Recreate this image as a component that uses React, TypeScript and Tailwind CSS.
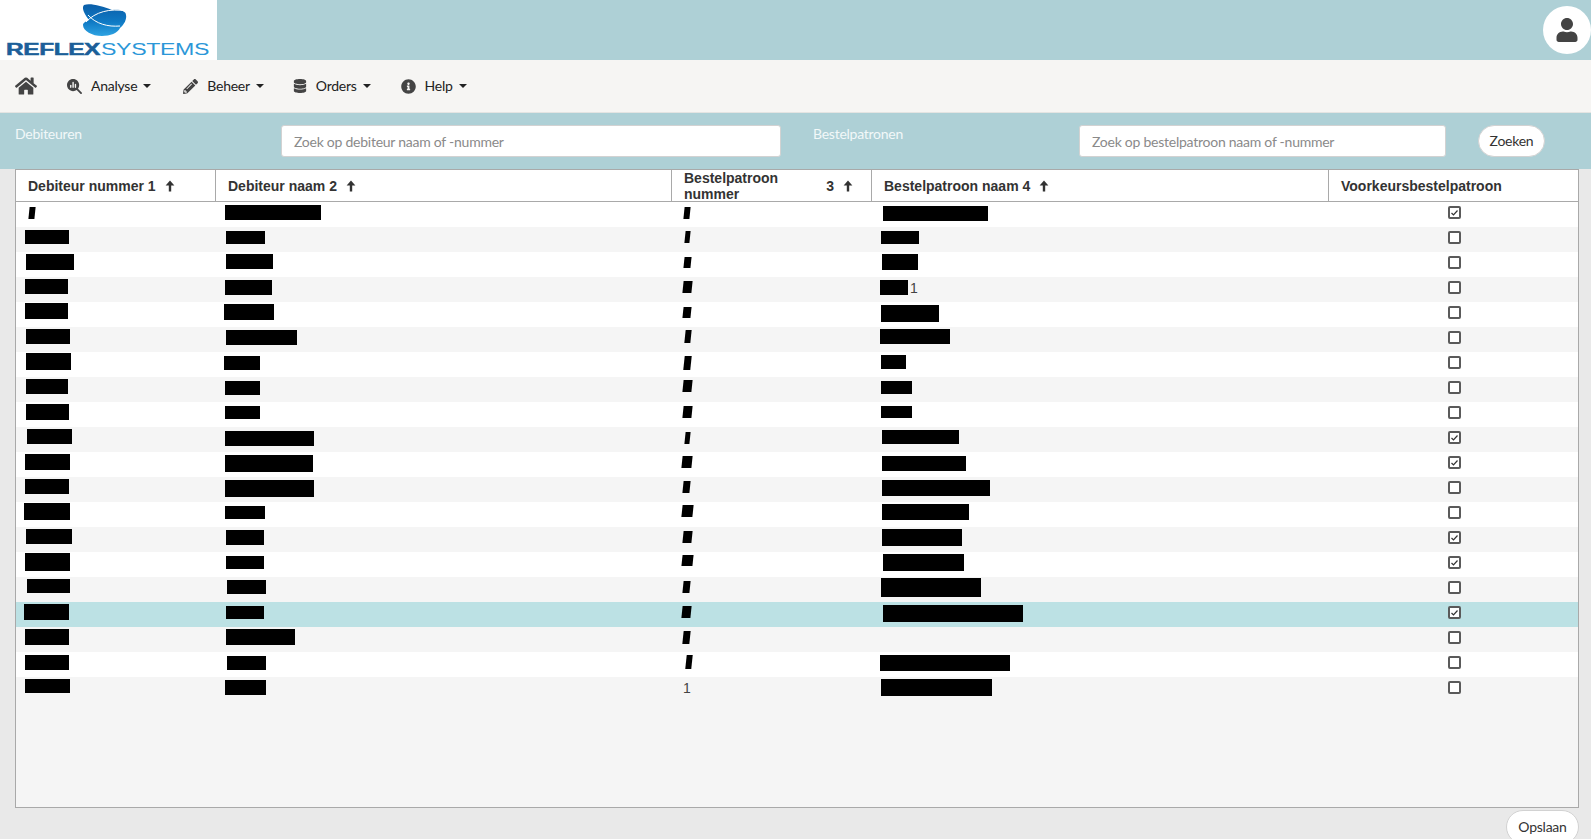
import React from 'react';
import { FaHome, FaPencilAlt, FaDatabase, FaInfoCircle, FaUser } from 'react-icons/fa';
import { FaMagnifyingGlassChart } from 'react-icons/fa6';

type Bar = [number, number, number, number] | null;

// blacked out values, page x / y / w / h per row
const rows: { bars: Bar[]; checked?: boolean; selected?: boolean; num?: string; tail?: string }[] = [
  { bars: [[29, 207, 6, 12], [225, 205, 96, 15], [684, 207, 6, 12], [883, 206, 105, 15]], checked: true },
  { bars: [[25, 230, 44, 14], [226, 231, 39, 13], [685, 231, 5, 12], [881, 231, 38, 13]] },
  { bars: [[26, 254, 48, 16], [226, 254, 47, 15], [684, 257, 7, 11], [882, 254, 36, 16]] },
  { bars: [[25, 279, 43, 15], [225, 280, 47, 15], [683, 281, 9, 12], [880, 280, 28, 15]], tail: '1' },
  { bars: [[25, 303, 43, 16], [224, 304, 50, 16], [683, 307, 8, 11], [881, 305, 58, 17]] },
  { bars: [[26, 329, 44, 15], [226, 330, 71, 15], [685, 330, 6, 13], [880, 329, 70, 15]] },
  { bars: [[26, 353, 45, 17], [224, 356, 36, 14], [684, 356, 7, 14], [881, 355, 25, 14]] },
  { bars: [[26, 379, 42, 15], [225, 381, 35, 14], [683, 380, 9, 12], [881, 381, 31, 13]] },
  { bars: [[26, 404, 43, 16], [225, 406, 35, 13], [683, 406, 9, 12], [881, 406, 31, 12]] },
  { bars: [[27, 429, 45, 15], [225, 431, 89, 15], [685, 432, 5, 12], [882, 430, 77, 14]], checked: true },
  { bars: [[25, 454, 45, 16], [225, 455, 88, 17], [682, 456, 10, 12], [882, 456, 84, 15]], checked: true },
  { bars: [[25, 479, 44, 15], [225, 480, 89, 17], [683, 481, 7, 12], [882, 480, 108, 16]] },
  { bars: [[24, 503, 46, 17], [225, 506, 40, 13], [682, 505, 11, 12], [882, 504, 87, 16]] },
  { bars: [[26, 529, 46, 15], [226, 530, 38, 15], [683, 531, 9, 12], [882, 529, 80, 17]], checked: true },
  { bars: [[25, 553, 45, 18], [226, 556, 38, 13], [682, 555, 11, 11], [883, 554, 81, 17]], checked: true },
  { bars: [[27, 579, 43, 14], [227, 580, 39, 14], [683, 581, 7, 12], [881, 578, 100, 19]] },
  { bars: [[24, 604, 45, 16], [226, 606, 38, 13], [682, 606, 9, 12], [883, 605, 140, 17]], checked: true, selected: true },
  { bars: [[25, 629, 44, 16], [226, 629, 69, 16], [683, 631, 7, 13], null] },
  { bars: [[25, 655, 44, 15], [227, 656, 39, 14], [686, 655, 6, 14], [880, 655, 130, 16]] },
  { bars: [[25, 679, 45, 14], [225, 680, 41, 15], null, [881, 679, 111, 17]], num: '1' },
];

const colLeft = [16, 216, 672, 872];

const ArrowUp = () => (
  <svg width="10" height="12" viewBox="0 0 9 11" className="shrink-0 text-[#333]">
    <path d="M4.5 0.5 L8.5 5 L5.6 5 L5.6 10.5 L3.4 10.5 L3.4 5 L0.5 5 Z" fill="currentColor" />
  </svg>
);

const Caret = () => <span className="ml-[6px] inline-block border-x-[4px] border-t-[4px] border-x-transparent border-t-[#222]" />;

const Logo = () => (
  <svg width="217" height="60" viewBox="0 0 217 60">
    <defs>
      <linearGradient id="lobe" x1="0" y1="0" x2="0" y2="1">
        <stop offset="0" stopColor="#0b5ea8" />
        <stop offset="0.55" stopColor="#0f79c4" />
        <stop offset="1" stopColor="#2ea3e2" />
      </linearGradient>
    </defs>
    <path
      d="M84 5 C90 3 102 6 112 10 C120 9 126 11 126 15 C127 19 124 25 120 28 C118 33 110 36 102 36 C92 36 83 31 83 25 C83 23 86 21 89 20 C85 15 81 8 84 5 Z"
      fill="url(#lobe)"
    />
    <path d="M86 22 C95 12 110 8 126 11" stroke="#fff" strokeWidth="1" fill="none" />
    <path d="M88 15 C96 24 108 27 120 26" stroke="#fff" strokeWidth="1" fill="none" />
    <text x="6" y="55" fontFamily="'Liberation Sans', sans-serif" fontWeight="700" fontSize="16" fill="#1b5f99" stroke="#1b5f99" strokeWidth="0.5" textLength="94" lengthAdjust="spacingAndGlyphs">
      REFLEX
    </text>
    <text x="101" y="55" fontFamily="'Liberation Sans', sans-serif" fontSize="16" fill="#2b97d8" textLength="108" lengthAdjust="spacingAndGlyphs">
      SYSTEMS
    </text>
  </svg>
);

const NavItem = ({ icon, label, className }: { icon: React.ReactNode; label: string; className: string }) => (
  <div className={`flex items-center ${className}`}>
    {icon}
    <span>{label}</span>
    <Caret />
  </div>
);

const Checkbox = ({ checked }: { checked?: boolean }) => (
  <span className="flex h-[13px] w-[13px] items-center justify-center rounded-[2px] border-2 border-[#5a5a5a] bg-white">
    {checked && (
      <svg width="9" height="8" viewBox="0 0 9 8" className="shrink-0">
        <path d="M1.5 4 L3.5 6 L7.5 1.5" stroke="#333" strokeWidth="1.2" fill="none" />
      </svg>
    )}
  </span>
);

const SortHead = ({ label }: { label: string }) => (
  <div className="flex items-center gap-[9px] border-r border-[#a9a9a9] pl-3">
    <span>{label}</span>
    <ArrowUp />
  </div>
);

export default function App() {
  return (
    <div className="flex h-[839px] flex-col overflow-hidden bg-[#e9e9e9] font-['Lato',sans-serif] text-sm tracking-[-0.25px] text-[#333]">
      <header className="flex h-[60px] shrink-0 items-center justify-between bg-[#aed0d6]">
        <div className="h-[60px] w-[217px] bg-white">
          <Logo />
        </div>
        <div className="flex h-12 w-12 items-center justify-center rounded-full bg-white text-[#444]">
          <FaUser size={24} />
        </div>
      </header>

      <nav className="flex h-[53px] shrink-0 items-center border-b border-[#e4e4e2] bg-[#f6f5f3] text-[#222]">
        <FaHome className="ml-[15px] text-[#444]" size={22} />
        <NavItem className="ml-[30px]" label="Analyse" icon={<FaMagnifyingGlassChart className="mr-[9px] text-[#444]" size={15} />} />
        <NavItem className="ml-[32px]" label="Beheer" icon={<FaPencilAlt className="mr-[9px] text-[#444]" size={15} />} />
        <NavItem className="ml-[29px]" label="Orders" icon={<FaDatabase className="mr-[9px] text-[#444]" size={14} />} />
        <NavItem className="ml-[30px]" label="Help" icon={<FaInfoCircle className="mr-[9px] text-[#444]" size={15} />} />
      </nav>

      <div className="flex h-[56px] shrink-0 items-start bg-[#aed0d6] pl-[15px] pt-3">
        <span className="-mt-[1px] w-[266px] text-[#f2f8f9]">Debiteuren</span>
        <div className="flex h-8 w-[500px] items-center rounded-[3px] border border-[#d2d2d2] bg-white pl-3 pt-[1px] text-[#8a8a8a]">
          Zoek op debiteur naam of -nummer
        </div>
        <span className="-mt-[1px] ml-8 w-[266px] text-[#f2f8f9]">Bestelpatronen</span>
        <div className="flex h-8 w-[367px] items-center rounded-[3px] border border-[#d2d2d2] bg-white pl-3 pt-[1px] text-[#8a8a8a]">
          Zoek op bestelpatroon naam of -nummer
        </div>
        <button className="ml-8 h-8 w-[67px] rounded-full border border-[#d2d2d2] bg-white text-[#333]">Zoeken</button>
      </div>

      <main className="flex flex-1 flex-col pl-[15px]">
        <div className="flex h-[639px] w-[1564px] shrink-0 flex-col border border-[#a9a9a9] bg-[#f5f5f5] font-['Liberation_Sans',sans-serif] tracking-normal">
          <div className="grid h-8 shrink-0 grid-cols-[200px_456px_200px_457px_1fr] border-b border-[#a9a9a9] bg-white font-bold text-[#333]">
            <SortHead label="Debiteur nummer 1" />
            <SortHead label="Debiteur naam 2" />
            <div className="flex items-center border-r border-[#a9a9a9] pl-3 pr-[18px]">
              <span className="w-[144px] leading-4">Bestelpatroon nummer</span>
              <span className="ml-auto mr-[9px]">3</span>
              <ArrowUp />
            </div>
            <SortHead label="Bestelpatroon naam 4" />
            <div className="flex items-center pl-3">Voorkeursbestelpatroon</div>
          </div>
          {rows.map((row, i) => (
            <div
              key={i}
              className={`grid h-[25px] shrink-0 grid-cols-[200px_456px_200px_457px_1fr] ${
                row.selected ? 'bg-[#bce1e4]' : i % 2 ? 'bg-[#f5f5f5]' : 'bg-white'
              }`}
            >
              {row.bars.map((bar, c) => (
                <div key={c} className="flex h-[25px] items-start overflow-visible text-[#444]">
                  {bar && (
                    <div
                      className={`bg-black ${c === 2 || (c === 0 && i === 0) ? '-skew-x-6' : ''}`}
                      style={{
                        marginLeft: bar[0] - colLeft[c],
                        marginTop: bar[1] - (202 + 25 * i),
                        width: bar[2],
                        height: bar[3],
                      }}
                    />
                  )}
                  {c === 2 && row.num && <span className="ml-[11px] mt-[1px]">{row.num}</span>}
                  {c === 3 && row.tail && <span className="ml-[2px] mt-[1px]">{row.tail}</span>}
                </div>
              ))}
              <div className="flex h-[25px] items-start pl-[119px] pt-[4px]">
                <Checkbox checked={row.checked} />
              </div>
            </div>
          ))}
        </div>
        <div className="flex w-[1564px] justify-end pt-[2px]">
          <button className="h-[34px] w-[73px] shrink-0 rounded-full border border-[#d2d2d2] bg-white text-[#333]">Opslaan</button>
        </div>
      </main>
    </div>
  );
}
